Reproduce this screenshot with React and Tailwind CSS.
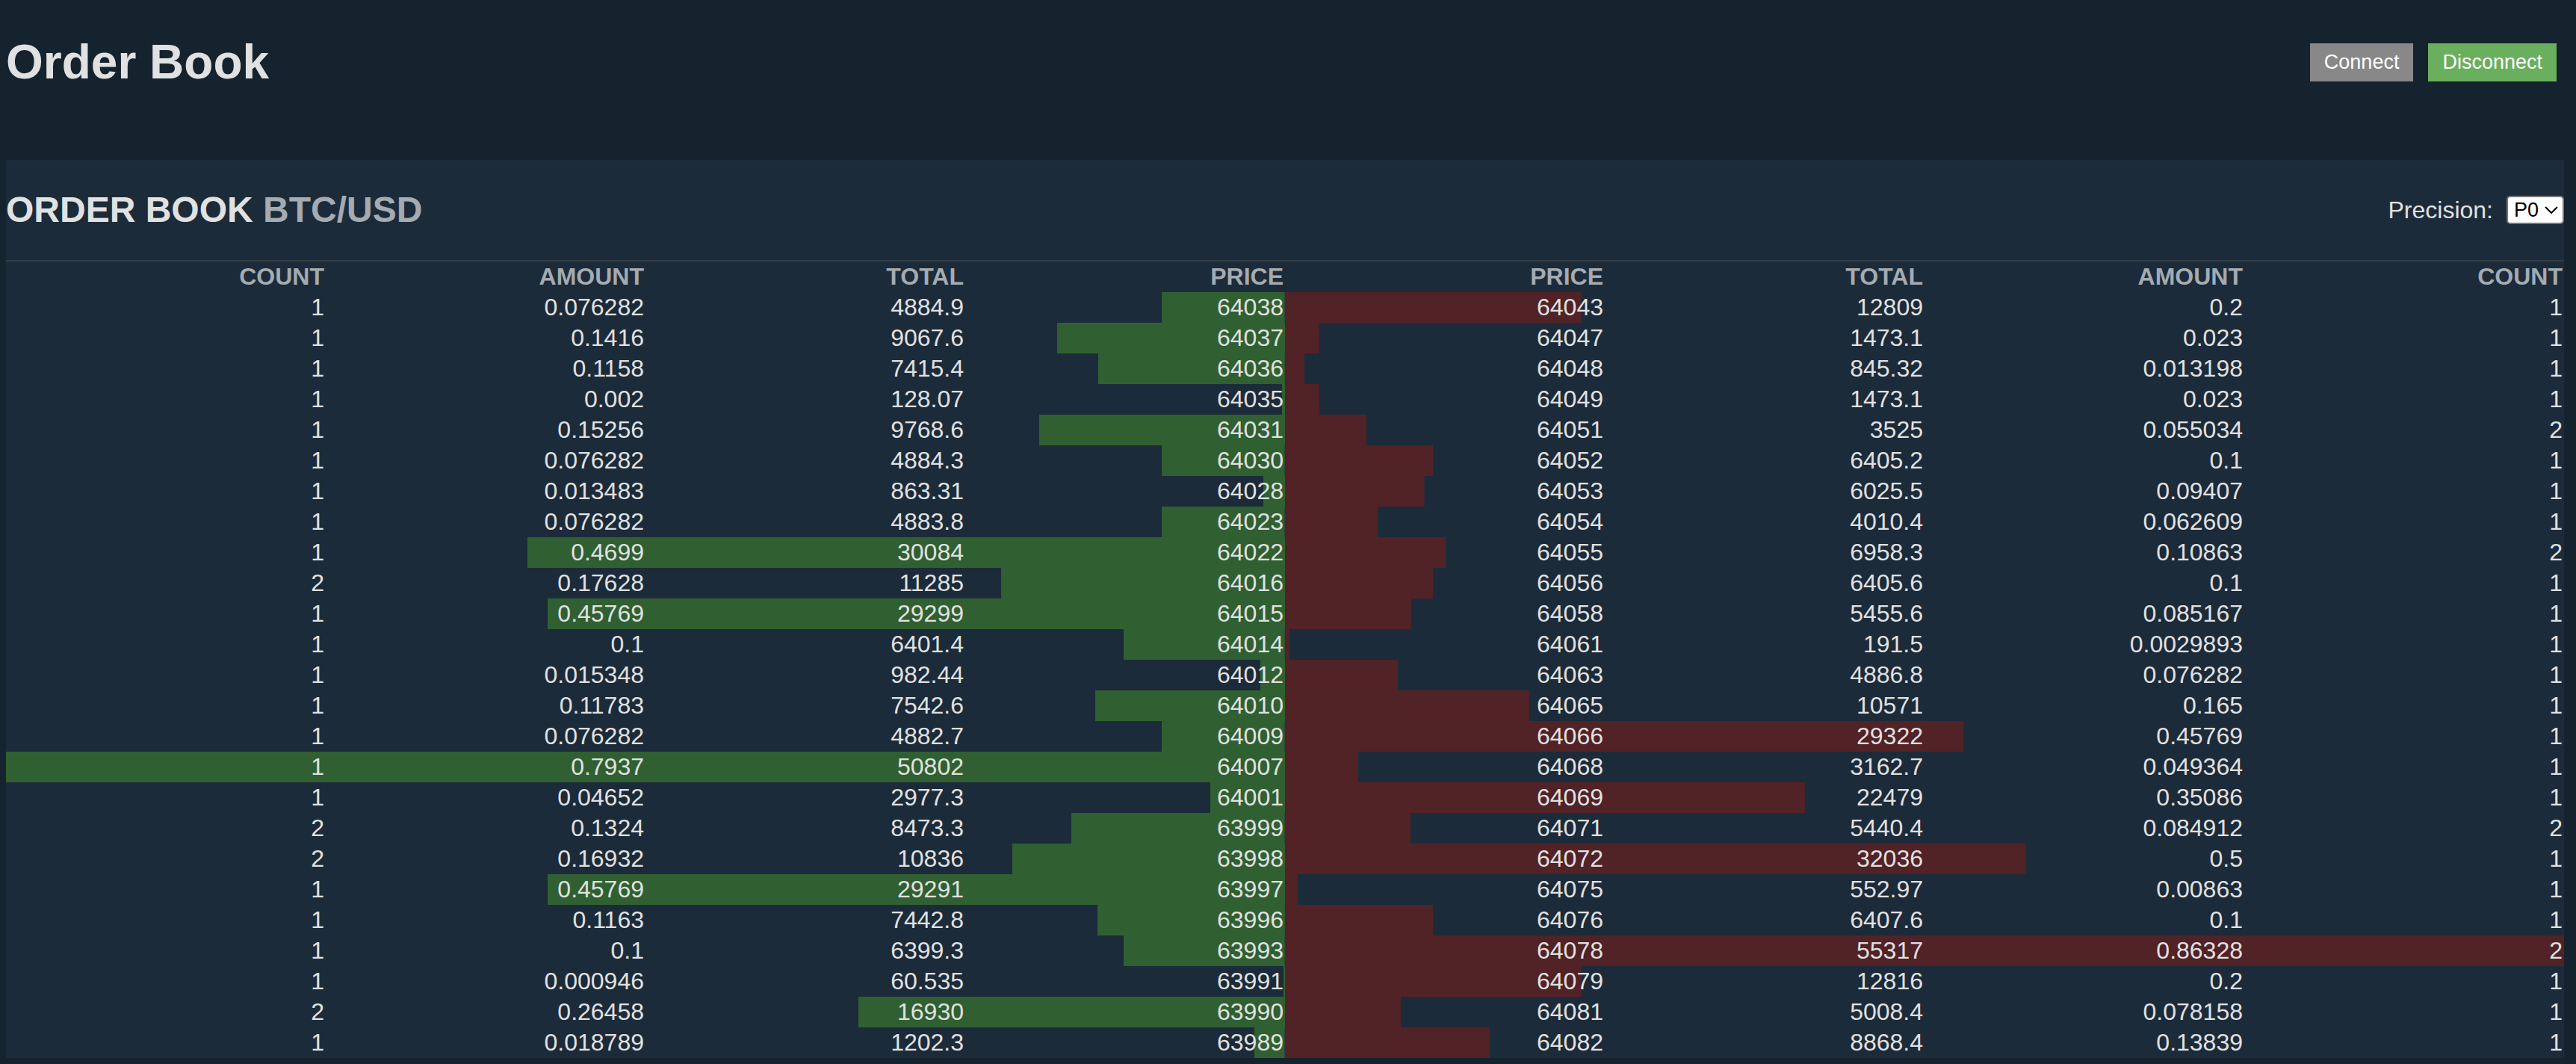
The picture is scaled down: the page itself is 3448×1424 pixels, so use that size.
const bids = [
  [1, "0.076282", "4884.9", 64038],
  [1, "0.1416", "9067.6", 64037],
  [1, "0.1158", "7415.4", 64036],
  [1, "0.002", "128.07", 64035],
  [1, "0.15256", "9768.6", 64031],
  [1, "0.076282", "4884.3", 64030],
  [1, "0.013483", "863.31", 64028],
  [1, "0.076282", "4883.8", 64023],
  [1, "0.4699", "30084", 64022],
  [2, "0.17628", "11285", 64016],
  [1, "0.45769", "29299", 64015],
  [1, "0.1", "6401.4", 64014],
  [1, "0.015348", "982.44", 64012],
  [1, "0.11783", "7542.6", 64010],
  [1, "0.076282", "4882.7", 64009],
  [1, "0.7937", "50802", 64007],
  [1, "0.04652", "2977.3", 64001],
  [2, "0.1324", "8473.3", 63999],
  [2, "0.16932", "10836", 63998],
  [1, "0.45769", "29291", 63997],
  [1, "0.1163", "7442.8", 63996],
  [1, "0.1", "6399.3", 63993],
  [1, "0.000946", "60.535", 63991],
  [2, "0.26458", "16930", 63990],
  [1, "0.018789", "1202.3", 63989],
];

const asks = [
  [64043, "12809", "0.2", 1],
  [64047, "1473.1", "0.023", 1],
  [64048, "845.32", "0.013198", 1],
  [64049, "1473.1", "0.023", 1],
  [64051, "3525", "0.055034", 2],
  [64052, "6405.2", "0.1", 1],
  [64053, "6025.5", "0.09407", 1],
  [64054, "4010.4", "0.062609", 1],
  [64055, "6958.3", "0.10863", 2],
  [64056, "6405.6", "0.1", 1],
  [64058, "5455.6", "0.085167", 1],
  [64061, "191.5", "0.0029893", 1],
  [64063, "4886.8", "0.076282", 1],
  [64065, "10571", "0.165", 1],
  [64066, "29322", "0.45769", 1],
  [64068, "3162.7", "0.049364", 1],
  [64069, "22479", "0.35086", 1],
  [64071, "5440.4", "0.084912", 2],
  [64072, "32036", "0.5", 1],
  [64075, "552.97", "0.00863", 1],
  [64076, "6407.6", "0.1", 1],
  [64078, "55317", "0.86328", 2],
  [64079, "12816", "0.2", 1],
  [64081, "5008.4", "0.078158", 1],
  [64082, "8868.4", "0.13839", 1],
];

function Side({ label, columns, rows, amountIndex, barClass }) {
  const max = Math.max(...rows.map((row) => Number(row[amountIndex])));
  return (
    <table aria-label={label} className="w-1/2 table-fixed border-collapse text-right">
      <thead>
        <tr>
          {columns.map((name) => (
            <th key={name} scope="col" className="px-[2px] py-[2px] font-bold text-[#a4abb1]">
              {name}
            </th>
          ))}
        </tr>
      </thead>
      <tbody>
        {rows.map((row, i) => (
          <tr
            key={i}
            className={barClass}
            style={{ backgroundSize: `${(Number(row[amountIndex]) / max) * 100}% 100%` }}
          >
            {row.map((value, j) => (
              <td key={j} className="px-[2px] py-[2px]">
                {value}
              </td>
            ))}
          </tr>
        ))}
      </tbody>
    </table>
  );
}

export default function App() {
  return (
    <div className="min-h-screen bg-[#15232f] pr-4 pb-2 pl-2 font-['Liberation_Sans',Arial,sans-serif] text-[32px] leading-[37px] text-[#e1e1e1]">
      <header className="flex items-center justify-between pt-[46px] pb-[94px]">
        <h1 className="text-[64px] leading-[74px] font-bold">Order Book</h1>
        <div className="flex gap-5 pr-[10px] text-[27px] leading-[31px] text-white">
          <button type="button" className="bg-[#888888] px-[19px] py-[10px]">
            Connect
          </button>
          <button type="button" className="bg-[#6aaf5e] px-[19px] py-[10px]">
            Disconnect
          </button>
        </div>
      </header>

      <main className="bg-[#1c2b3a]">
        <div className="flex items-center justify-between border-b-2 border-[#333b43] py-10">
          <h2 className="text-[48px] leading-[54px] font-bold">
            ORDER BOOK <span className="text-[#a4abb1]">BTC/USD</span>
          </h2>
          <div className="flex items-center gap-[18px]">
            <label htmlFor="precision">Precision:</label>
            <div className="relative flex">
              <select
                id="precision"
                defaultValue="P0"
                className="h-[38px] w-[77px] appearance-none rounded-[5px] border-2 border-[#767676] bg-white pl-2 text-[27px] leading-[31px] text-black"
              >
                <option>P0</option>
                <option>P1</option>
                <option>P2</option>
                <option>P3</option>
                <option>P4</option>
              </select>
              <svg
                viewBox="0 0 18 10"
                className="pointer-events-none absolute top-[14px] right-2 h-[10px] w-[18px] fill-none stroke-black stroke-2"
                aria-hidden="true"
              >
                <path d="M1 1l8 8 8-8" />
              </svg>
            </div>
          </div>
        </div>

        <div className="flex">
          <Side
            label="Bids"
            columns={["COUNT", "AMOUNT", "TOTAL", "PRICE"]}
            rows={bids}
            amountIndex={1}
            barClass="bg-[linear-gradient(#306031,#306031)] bg-right bg-no-repeat"
          />
          <Side
            label="Asks"
            columns={["PRICE", "TOTAL", "AMOUNT", "COUNT"]}
            rows={asks}
            amountIndex={2}
            barClass="bg-[linear-gradient(#512226,#512226)] bg-left bg-no-repeat"
          />
        </div>
      </main>
    </div>
  );
}
